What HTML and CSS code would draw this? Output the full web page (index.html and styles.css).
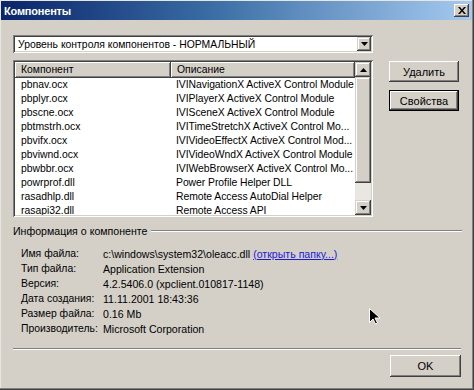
FILE: index.html
```html
<!DOCTYPE html>
<html lang="ru">
<head>
<meta charset="utf-8">
<title>Компоненты</title>
<link rel="stylesheet" href="styles.css">
</head>
<body>
<div class="window">
  <div class="titlebar">
    <span class="title">Компоненты</span>
    <span class="close"><svg width="8" height="7" viewBox="0 0 8 7"><path d="M0 0h2l2 2.5L6 0h2L5 3.5 8 7H6L4 4.5 2 7H0l3-3.5z" fill="#000"/></svg></span>
  </div>
  <div class="content">
    <div class="combo">
      <span class="combo-text">Уровень контроля компонентов - НОРМАЛЬНЫЙ</span>
      <span class="drop-btn"><svg width="7" height="4" viewBox="0 0 7 4"><path d="M0 0h7L3.5 4z" fill="#000"/></svg></span>
    </div>
    <div class="main-row">
      <div class="listview">
        <div class="lv-content">
          <div class="lv-header">
            <div class="hcell c1">Компонент</div>
            <div class="hcell c2">Описание</div>
          </div>
          <div class="lv-row"><span class="c1">pbnav.ocx</span><span class="c2">IVINavigationX ActiveX Control Module</span></div>
          <div class="lv-row"><span class="c1">pbplyr.ocx</span><span class="c2">IVIPlayerX ActiveX Control Module</span></div>
          <div class="lv-row"><span class="c1">pbscne.ocx</span><span class="c2">IVISceneX ActiveX Control Module</span></div>
          <div class="lv-row"><span class="c1">pbtmstrh.ocx</span><span class="c2">IVITimeStretchX ActiveX Control Mo...</span></div>
          <div class="lv-row"><span class="c1">pbvifx.ocx</span><span class="c2">IVIVideoEffectX ActiveX Control Mod...</span></div>
          <div class="lv-row"><span class="c1">pbviwnd.ocx</span><span class="c2">IVIVideoWndX ActiveX Control Module</span></div>
          <div class="lv-row"><span class="c1">pbwbbr.ocx</span><span class="c2">IVIWebBrowserX ActiveX Control Mo...</span></div>
          <div class="lv-row"><span class="c1">powrprof.dll</span><span class="c2">Power Profile Helper DLL</span></div>
          <div class="lv-row"><span class="c1">rasadhlp.dll</span><span class="c2">Remote Access AutoDial Helper</span></div>
          <div class="lv-row"><span class="c1">rasapi32.dll</span><span class="c2">Remote Access API</span></div>
        </div>
        <div class="scrollbar">
          <div class="sb-btn"><svg width="7" height="4" viewBox="0 0 7 4"><path d="M0 4h7L3.5 0z" fill="#000"/></svg></div>
          <div class="sb-thumb"></div>
          <div class="sb-track"></div>
          <div class="sb-btn"><svg width="7" height="4" viewBox="0 0 7 4"><path d="M0 0h7L3.5 4z" fill="#000"/></svg></div>
        </div>
      </div>
      <div class="side-buttons">
        <div class="btn">Удалить</div>
        <div class="btn default">Свойства</div>
      </div>
    </div>
    <div class="group-title">
      <span>Информация о компоненте</span>
      <div class="etched grow"></div>
    </div>
    <div class="info">
      <span class="lbl">Имя файла:</span><span class="val">c:\windows\system32\oleacc.dll <a class="link">(открыть папку...)</a></span>
      <span class="lbl">Тип файла:</span><span class="val">Application Extension</span>
      <span class="lbl">Версия:</span><span class="val">4.2.5406.0 (xpclient.010817-1148)</span>
      <span class="lbl">Дата создания:</span><span class="val">11.11.2001 18:43:36</span>
      <span class="lbl">Размер файла:</span><span class="val">0.16 Mb</span>
      <span class="lbl">Производитель:</span><span class="val">Microsoft Corporation</span>
    </div>
    <div class="etched bottom-sep"></div>
    <div class="footer">
      <div class="btn ok">OK</div>
    </div>
  </div>
  <svg class="cursor" width="12" height="17" viewBox="0 0 12 17"><path d="M0.5 0.5v14l3.5-3.5 2.5 5 2-1-2.5-5h5z" fill="#000" stroke="#fff" stroke-width="1"/></svg>
</div>
</body>
</html>
```

FILE: styles.css
```css
* { box-sizing: border-box; }
html, body { margin: 0; padding: 0; }
body {
  width: 474px;
  height: 390px;
  background: #d4d0c8;
  font-family: "Liberation Sans", Arial, sans-serif;
  font-size: 10.4px;
  color: #000;
  overflow: hidden;
}
.window {
  position: relative;
  width: 474px;
  height: 390px;
  padding: 1px 2px 2px 1px;
  background: #d4d0c8;
  box-shadow: inset -1px -1px #404040, inset -2px -2px #808080, inset 1px 1px #e8e6e1;
  display: flex;
  flex-direction: column;
}
.titlebar {
  height: 19px;
  flex: none;
  background: linear-gradient(to right, #0a246a 0%, #3a6ea5 45%, #a6caf0 100%);
  color: #fff;
  display: flex;
  align-items: center;
  justify-content: space-between;
  padding: 0 3px 0 3px;
}
.title {
  font-weight: bold;
  font-size: 11px;
  letter-spacing: -0.2px;
}
.close {
  width: 15px;
  height: 13px;
  background: #d4d0c8;
  display: flex;
  align-items: center;
  justify-content: center;
  box-shadow: inset -1px -1px #404040, inset 1px 1px #fff, inset -2px -2px #808080;
}
.content {
  flex: 1;
  display: flex;
  flex-direction: column;
  padding: 15px 11px 0 12px;
}
.combo {
  width: 360px;
  height: 18px;
  background: #fff;
  box-shadow: inset 1px 1px #808080, inset -1px -1px #fff, inset 2px 2px #404040, inset -2px -2px #d4d0c8;
  display: flex;
  align-items: center;
  padding: 2px;
}
.combo-text {
  flex: 1;
  padding-left: 3px;
  white-space: nowrap;
}
.drop-btn, .sb-btn {
  width: 14px;
  height: 14px;
  background: #d4d0c8;
  display: flex;
  align-items: center;
  justify-content: center;
  box-shadow: inset -1px -1px #404040, inset 1px 1px #d4d0c8, inset -2px -2px #808080, inset 2px 2px #fff;
  flex: none;
}
.main-row {
  display: flex;
  margin-top: 7px;
  gap: 16px;
  align-items: flex-start;
}
.listview {
  width: 360px;
  height: 157px;
  background: #fff;
  padding: 2px;
  box-shadow: inset 1px 1px #808080, inset -1px -1px #fff, inset 2px 2px #404040, inset -2px -2px #d4d0c8;
  display: flex;
}
.lv-content {
  flex: 1;
  overflow: hidden;
}
.lv-header {
  display: flex;
  height: 16px;
  background: #d4d0c8;
}
.hcell {
  height: 16px;
  line-height: 16px;
  padding-left: 6px;
  box-shadow: inset -1px -1px #404040, inset 1px 1px #fff, inset -2px -2px #808080;
}
.c1 { width: 156px; flex: none; }
.c2 { flex: 1; min-width: 0; }
.lv-row {
  display: flex;
  height: 14px;
  line-height: 14px;
  white-space: nowrap;
}
.lv-row .c1 { padding-left: 6px; }
.lv-row .c2 { padding-left: 5px; letter-spacing: -0.05px; }
.scrollbar {
  width: 16px;
  flex: none;
  display: flex;
  flex-direction: column;
  background: #e9e7e2;
}
.scrollbar .sb-btn { width: 16px; height: 15px; }
.sb-thumb {
  height: 106px;
  background: #d4d0c8;
  box-shadow: inset -1px -1px #404040, inset 1px 1px #d4d0c8, inset -2px -2px #808080, inset 2px 2px #fff;
}
.sb-track { flex: 1; }
.side-buttons {
  display: flex;
  flex-direction: column;
  gap: 8px;
  padding-top: 1px;
}
.btn {
  width: 70px;
  height: 21px;
  background: #d4d0c8;
  display: flex;
  align-items: center;
  justify-content: center;
  font-size: 11px;
  box-shadow: inset -1px -1px #404040, inset 1px 1px #fff, inset -2px -2px #808080;
}
.btn.default {
  box-shadow: inset 0 0 0 1px #000, inset -2px -2px #404040, inset 2px 2px #fff, inset -3px -3px #808080;
}
.etched {
  height: 2px;
  border-top: 1px solid #808080;
  border-bottom: 1px solid #fff;
}
.group-title {
  display: flex;
  align-items: center;
  height: 14px;
  margin-top: 7px;
  width: 449px;
  gap: 4px;
}
.group-title span { white-space: nowrap; font-size: 10.6px; }
.grow { flex: 1; }
.info {
  display: grid;
  grid-template-columns: 82px 1fr;
  grid-auto-rows: 15px;
  align-items: center;
  margin-top: 8px;
  padding-left: 8px;
  white-space: nowrap;
}
.val { font-size: 10.6px; }
.link {
  color: #1a1ad8;
  text-decoration: underline;
}
.bottom-sep {
  width: 448px;
  margin-top: 12px;
}
.footer {
  display: flex;
  justify-content: flex-end;
  padding-right: 1px;
  margin-top: 5px;
  width: 449px;
}
.btn.ok {
  width: 71px;
  height: 22px;
}
.cursor {
  position: absolute;
  left: 369px;
  top: 308px;
}
```
